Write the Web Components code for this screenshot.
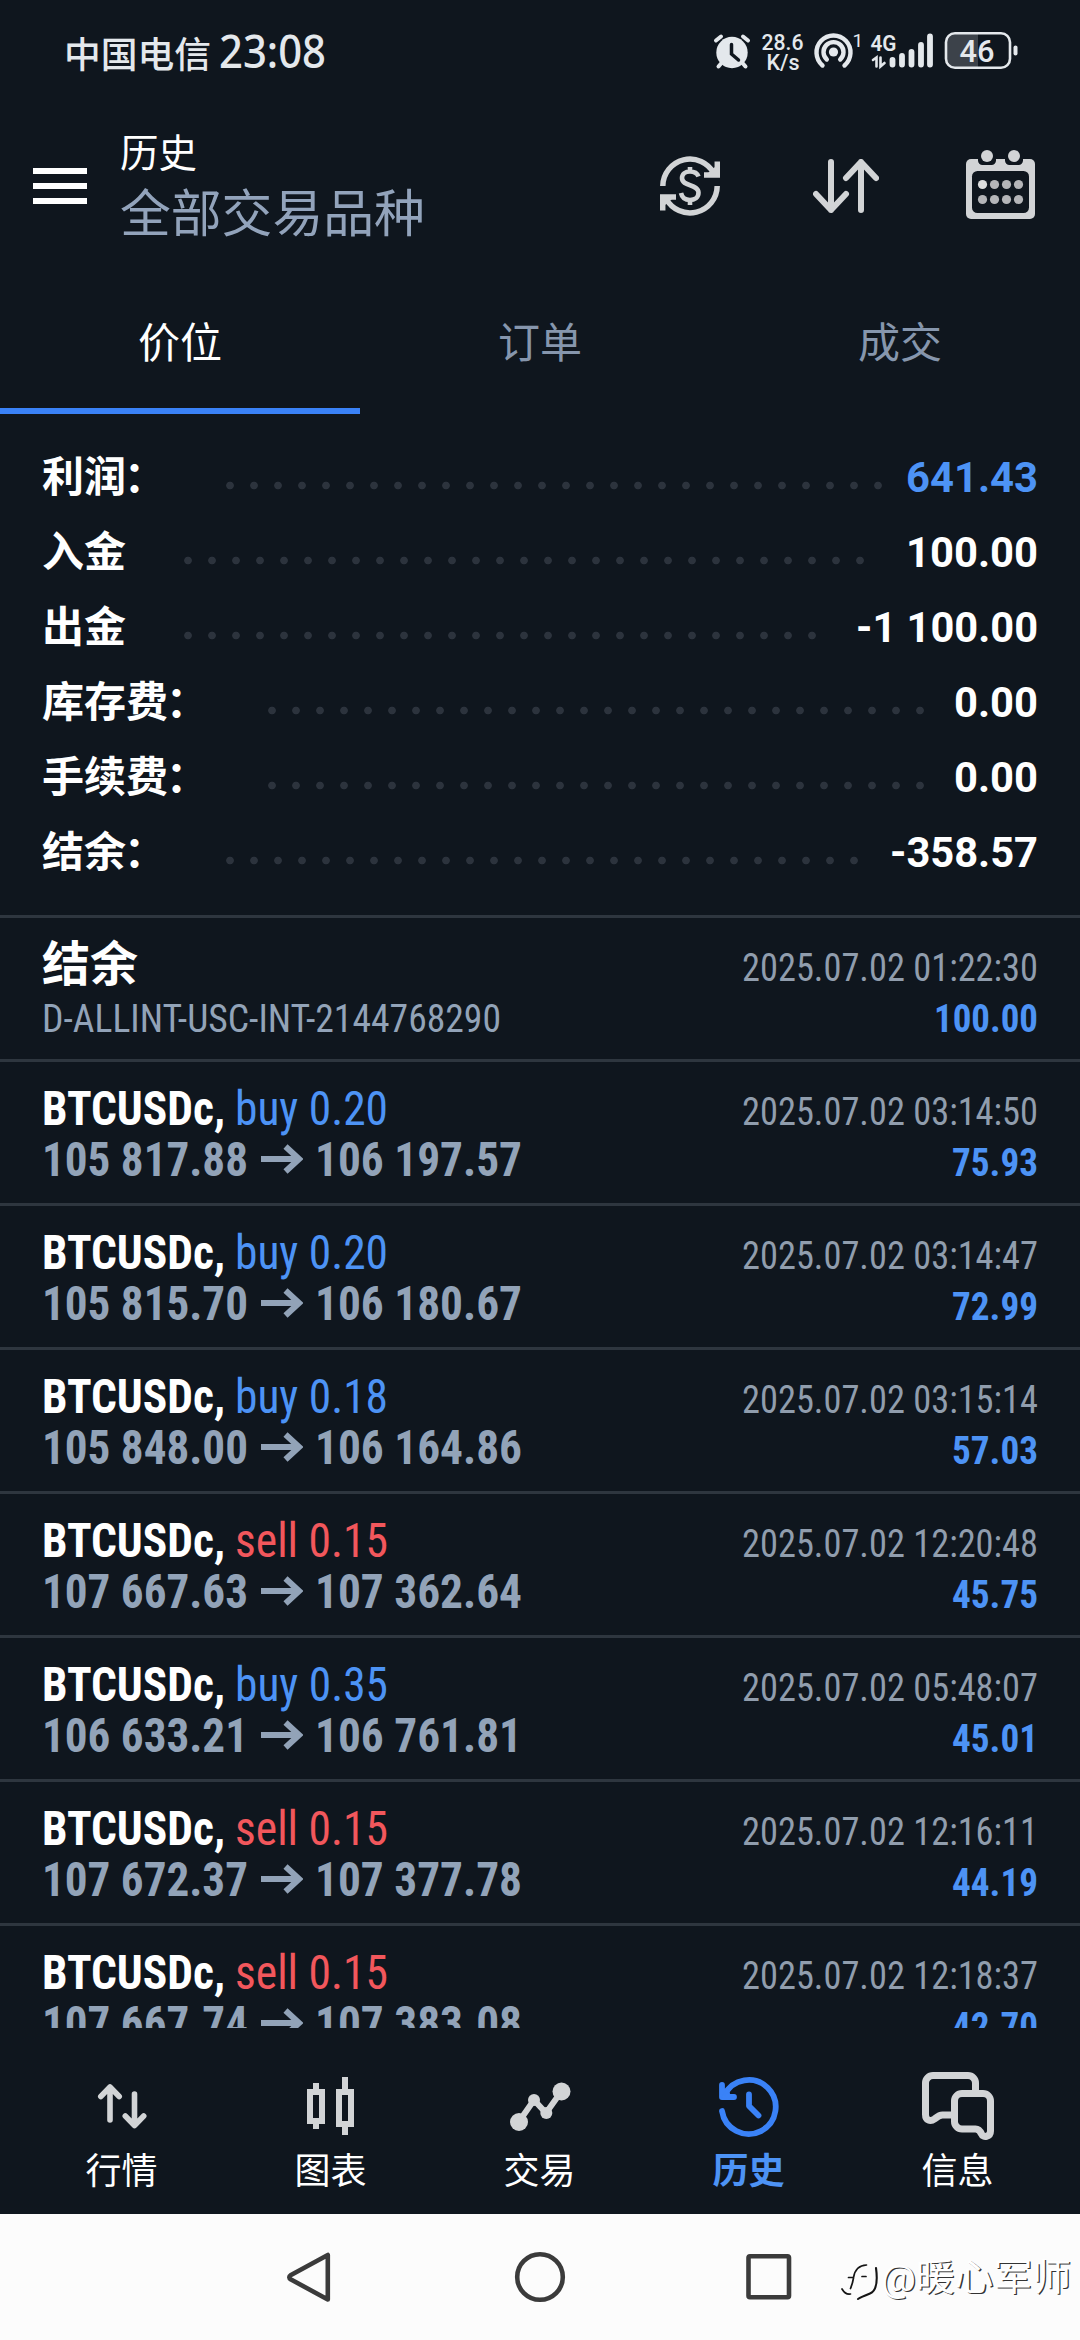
<!DOCTYPE html>
<html lang="zh-CN">
<head>
<meta charset="utf-8">
<title>历史</title>
<style>
html,body{margin:0;padding:0;background:#0f161e}
body{width:1080px;height:2340px;overflow:hidden;font-family:Roboto,"Noto Sans CJK SC",sans-serif;color:#fff}
</style>
</head>
<body>
<history-app></history-app>
<script>
const define = (name, html, init) => {
  const tpl = document.createElement('template');
  tpl.innerHTML = html;
  customElements.define(name, class extends HTMLElement {
    constructor() {
      super();
      this.attachShadow({ mode: 'open' }).appendChild(tpl.content.cloneNode(true));
    }
    connectedCallback() { if (init && !this.ready) { this.ready = true; init(this, this.shadowRoot); } }
  });
};

// Text squeezed or stretched horizontally to a given advance width.
define('fit-text', `<style>
:host{display:inline-block;white-space:nowrap;flex:none}
span{display:inline-block;transform-origin:0 50%}
</style><span><slot></slot></span>`, (el, root) => {
  const w = +el.getAttribute('w'), s = root.querySelector('span');
  el.style.width = w + 'px';
  const n = s.offsetWidth ? s.getBoundingClientRect().width : w;
  s.style.transform = 'scaleX(' + (w / n) + ')';
});

define('status-bar', `
<style>
:host{display:flex;height:104px;box-sizing:border-box;padding:0 49px 0 64px;align-items:flex-start;color:#e4e8ec}
.l{display:flex;align-items:baseline;padding-top:23px;line-height:56px;margin-right:auto;gap:8px}
.c{font-size:36.5px;font-weight:500}
.t{font-family:"Noto Sans",sans-serif;font-size:45px;font-weight:500}
svg{display:block;margin-top:26px}
text{font-family:Roboto,sans-serif;fill:#e4e8ec;font-weight:400;stroke:none}
</style>
<div class="l"><fit-text class="c" w="147">中国电信</fit-text><fit-text class="t" w="107">23:08</fit-text></div>
<svg width="319" height="50" viewBox="712 26 319 50" fill="none" stroke="#e4e8ec" stroke-linecap="round">
  <circle cx="732" cy="52.500" r="15.700" fill="#e4e8ec" stroke="none"/>
  <path d="M716 40.500l5-4M748 40.500l-5-4M721.500 63l-3 3.500M742.500 63l3 3.500" stroke-width="4"/>
  <path d="M731.500 44.500v9.500l7 6" stroke="#0f161e" stroke-width="3.500"/>
  <text x="761.500" y="50" font-size="22.500" textLength="42" lengthAdjust="spacingAndGlyphs" style="font-weight:500">28.6</text>
  <text x="766.500" y="69.500" font-size="22.500" textLength="33" lengthAdjust="spacingAndGlyphs" style="font-weight:500">K/s</text>
  <path d="M822.500 65.500A17 17 0 1 1 844.500 65.500M826.800 59.500A10 10 0 1 1 840.200 59.500" stroke-width="4.400"/>
  <circle cx="833.500" cy="52" r="4.600" fill="#e4e8ec" stroke="none"/>
  <text x="852.500" y="46.500" font-size="19">1</text>
  <text x="870.500" y="50.500" font-size="22.500" textLength="26" lengthAdjust="spacingAndGlyphs" style="font-weight:600">4G</text>
  <path d="M873 60l3.500-2.500v9M880.500 57.500v9l4-3.500" stroke-width="2.600"/>
  <path d="M892.500 60v4.500M902 56v8.500M911.500 52v12.500M921 45v19.500M930 36.500v28" stroke-width="5.800"/>
  <path d="M978 34H956a9 9 0 0 0-9 9v15a9 9 0 0 0 9 9h22z" fill="#3c424a" stroke="none"/>
  <rect x="946" y="33.200" width="64" height="34.500" rx="9" stroke-width="2.600"/>
  <path d="M1015.500 47.500v6" stroke-width="4"/>
  <text x="959.500" y="62" font-size="32" textLength="35" lengthAdjust="spacingAndGlyphs" style="font-weight:500">46</text>
</svg>`);

define('app-header', `
<style>
:host{display:flex;height:166px;box-sizing:border-box;padding-left:33px;padding-right:45px}
.m{display:flex;flex-direction:column;gap:9px;width:54px;padding-top:64px;margin-right:33px}
.m i{height:6px;background:#fff}
.t{padding-top:19px;margin-right:auto;line-height:61px}
.t div{height:61px}
.a{font-size:38.500px}.b{font-size:50.800px;color:#92a3bb}
.i{display:flex;align-items:flex-start}
svg{display:block}
.s1{margin:52px 93px 0 0}.s2{margin:55px 87px 0 0}.s3{margin-top:46px}
</style>
<div class="m"><i></i><i></i><i></i></div>
<div class="t"><div class="a">历史</div><div class="b">全部交易品种</div></div>
<div class="i">
<svg class="s1" width="60" height="60" fill="none" stroke="#d2d4d6" stroke-width="5.500">
  <path d="M2.800 30A27.200 27.200 0 0 1 54 17.500M57.200 30A27.200 27.200 0 0 1 6 42.500"/>
  <path d="M57.300 5.500V19H44M2.700 54.500V41H16"/>
  <path d="M48 17l7-6 2 7zM12 43l-7 6-2-7z" fill="#d2d4d6" stroke="none"/>
  <path d="M38.500 20.500C37 16.500 33.500 15.500 30 15.500c-4.500 0-8 2.500-8 6.600 0 9 16.500 5.300 16.500 14.700 0 4.700-4 7.200-8.500 7.200s-8-2.500-9-7M30 11v5M30 43v6" stroke-width="4.600"/>
</svg>
<svg class="s2" width="66" height="54" fill="none" stroke="#d2d4d6" stroke-width="6" stroke-linecap="round" stroke-linejoin="round">
  <path d="M18 3v48M3 35l15 16 15-16M48 51V3M33 19L48 3l15 16"/>
</svg>
<svg class="s3" width="69" height="69">
  <rect y="9" width="69" height="60" rx="5" fill="#d2d4d6"/>
  <path d="M12 8h18v2.500a4.500 4.500 0 0 1-4.500 4.500h-9A4.500 4.500 0 0 1 12 10.500zM39 8h18v2.500a4.500 4.500 0 0 1-4.500 4.500h-9a4.500 4.500 0 0 1-4.500-4.500z" fill="#0f161e"/>
  <rect x="6" y="21" width="57" height="42" rx="5.500" fill="#0f161e"/>
  <circle cx="21" cy="6" r="6" fill="#d2d4d6"/><circle cx="48" cy="6" r="6" fill="#d2d4d6"/>
  <g fill="#b4b5b8"><circle cx="16.500" cy="34.500" r="4.600" fill="#dcdddd"/><circle cx="28.500" cy="34.500" r="4.600"/><circle cx="40.500" cy="34.500" r="4.600"/><circle cx="52.500" cy="34.500" r="4.600"/><circle cx="16.500" cy="49.500" r="4.600"/><circle cx="28.500" cy="49.500" r="4.600"/><circle cx="40.500" cy="49.500" r="4.600"/><circle cx="52.500" cy="49.500" r="4.600"/></g>
</svg>
</div>`);

define('tab-item', `
<style>
:host{flex:1;box-sizing:border-box;height:144px;border-bottom:6px solid transparent;padding-top:9px;text-align:center;font-size:42px;line-height:129px;color:#8696ad}
:host([active]){color:#fff;border-color:#3a82f7}
</style><slot></slot>`);

define('summary-row', `
<style>
:host{display:flex;height:75px;padding:0 42px;line-height:75px;font-size:42px;font-weight:700}
.c{margin:0 2px 0 -2px}
.d{margin-left:50px;height:75px;margin-right:auto;background:radial-gradient(circle 4px at 12px 45.500px,#2c333d 3.400px,transparent 4.200px) 0 0/24px 75px repeat-x}
:host([blue]) .v{color:#4d93f5}
</style><span class="k"></span><span class="d"></span><span class="v"></span>`, (el, root) => {
  root.querySelector('.k').innerHTML = el.getAttribute('label').replace('：', '<span class="c">：</span>');
  root.querySelector('.d').style.width = el.getAttribute('dots') * 24 + 'px';
  root.querySelector('.v').innerHTML = '<fit-text w="' + el.getAttribute('w') + '">' + el.getAttribute('value') + '</fit-text>';
});

const dealStyle = `
<style>
:host{display:block;height:141px;border-top:3px solid #2e363f;padding:0 42px}
.r{display:flex;align-items:baseline;height:51px;line-height:51px;font-size:39px;font-stretch:condensed}
.r:first-of-type{padding-top:21px}
.r::before{content:"\\200b";font-size:48px;width:0}
.g{flex:1}
.n,.p{font-size:48px;font-weight:700}
.o{font-size:48px;font-weight:400;color:#4d93f5}
:host([side=sell]) .o{color:#f2575c}
.p,.x,.t{color:#92a3b8}.t{color:#909dad}
.v{font-weight:700;color:#4d93f5}
svg{flex:none;align-self:flex-start;margin:10px 12px 0 13px}
</style>`;
define('balance-item', dealStyle + `
<div class="r"><span class="n">结余</span><span class="g"></span><fit-text class="t" w="296">2025.07.02 01:22:30</fit-text></div>
<div class="r"><fit-text class="x" w="459">D-ALLINT-USC-INT-2144768290</fit-text><span class="g"></span><fit-text class="v" w="104">100.00</fit-text></div>`);

define('deal-item', dealStyle + `<div class="r a"></div><div class="r b"></div>`, (el, root) => {
  const a = n => el.getAttribute(n);
  root.querySelector('.a').innerHTML = `<fit-text class="n" w="183">BTCUSDc,</fit-text><fit-text class="o" w="153" style="margin-left:10px">${a('side')} ${a('lot')}</fit-text><span class="g"></span><fit-text class="t" w="296">2025.07.02 ${a('time')}</fit-text>`;
  root.querySelector('.b').innerHTML = `<fit-text class="p" w="206">${a('from')}</fit-text><svg width="42" height="30" fill="none" stroke="#92a3b8" stroke-width="6" stroke-linejoin="miter"><path d="M0 15h38M24.500 2.500L38 15 24.500 27.500"/></svg><fit-text class="p" w="207">${a('to')}</fit-text><span class="g"></span><fit-text class="v" w="86">${a('profit')}</fit-text>`;
});

define('nav-item', `
<style>
:host{width:209px;display:flex;flex-direction:column;align-items:center;font-size:36px;line-height:48px}
.i{height:78px;display:flex;align-items:center;margin-bottom:3px}
:host([active]) .l{color:#4d93f5;font-weight:700}
</style><div class="i"><slot name="icon"></slot></div><div class="l"><slot></slot></div>`);

define('bottom-nav', `
<style>
:host{display:flex;height:186px;box-sizing:border-box;padding:39px 18px 0 17px}
svg{display:block;overflow:visible}
</style>
<nav-item><svg slot="icon" width="48" height="44" fill="none" stroke="#d2d4d6" stroke-width="5.600" stroke-linecap="round" stroke-linejoin="round"><path d="M12 36V3M2.800 12.500L12 3l9.200 9.500M36.500 10v31M27.300 32l9.200 9.500 9.200-9.500"/></svg>行情</nav-item>
<nav-item><svg slot="icon" width="48" height="58" fill="none" stroke="#d2d4d6" stroke-width="6"><path d="M3 15h12v29H3zM9 6v9M9 44v8M32 15h12v32H32zM38 0v15M38 47v11"/></svg>图表</nav-item>
<nav-item><svg slot="icon" width="60" height="49" fill="#d2d4d6"><path d="M8.700 40L24 18l12 13L51 10" fill="none" stroke="#d2d4d6" stroke-width="6"/><circle cx="9" cy="40" r="9"/><circle cx="24" cy="18" r="6"/><circle cx="36.300" cy="31" r="6"/><circle cx="51.500" cy="9.500" r="9"/></svg>交易</nav-item>
<nav-item active><svg slot="icon" width="60" height="60" fill="none" stroke="#3a82f7" stroke-width="5.800" stroke-linecap="round" stroke-linejoin="round"><path d="M3 35A27 27 0 1 0 5.500 19M3 9v12h12"/><path d="M3.500 20.500l5-7 2.500 7z" fill="#3a82f7" stroke-width="2"/><path d="M30 18.500V30l9.500 9.500"/></svg>历史</nav-item>
<nav-item><svg slot="icon" width="72" height="68" fill="none" stroke="#d2d4d6" stroke-width="7" stroke-linejoin="round"><path d="M53.500 18V11a7.500 7.500 0 0 0-7.500-7.500H11A7.500 7.500 0 0 0 3.500 11v31.500c0 6 5 7.500 9 4.500 3-2.500 4.500-4 8-4H30"/><path d="M40 21.500h21a7.500 7.500 0 0 1 7.500 7.500v30c0 6-7.500 7-9 3-1.500-3.500-3-5-6-5H40a7.500 7.500 0 0 1-7.500-7.500V29a7.500 7.500 0 0 1 7.500-7.500z"/></svg>信息</nav-item>`);

define('system-nav', `
<style>
:host{display:flex;height:126px;background:#fcfcfc}
svg{display:block;margin:30px 0 0 280px;flex:none}
.w{display:flex;align-items:flex-start;height:66px;padding-top:35px;margin-left:39px;line-height:60px;font-size:37px;color:#fff;text-shadow:1.200px 1.200px .6px #333}
.w svg{margin:12px 2px 0 0}
</style>
<svg width="520" height="66" viewBox="280 2244 520 66" fill="none" stroke="#3b3b3b" stroke-width="4.600" stroke-linejoin="round">
<path d="M327.800 2255v44.500L291 2279.500q-3.500-2.300 0-4.600z"/><circle cx="540" cy="2277" r="22.800"/><rect x="748.500" y="2256.300" width="40.500" height="41" rx="1.500"/></svg>
<div class="w"><svg width="40" height="42" viewBox="838 2264 40 42" fill="none" stroke="#151515" stroke-width="1.700" stroke-linecap="round" stroke-linejoin="round"><path d="M847.500 2280.500h5q2-12 13-12.500M861 2279.500h4M852.500 2281q-1 6-3 10.500M849.500 2297q-5 1-8.500-5" /><path d="M875 2271q3 22-6 25.500T857 2302" stroke-width="2.100"/></svg><fit-text w="190">@暖心军师</fit-text></div>`);

define('history-app', `
<style>
:host{display:flex;flex-direction:column;width:1080px;height:2340px;overflow:hidden;background:#0f161e}
.tabs{display:flex}
.sum{height:501px;box-sizing:border-box;padding-top:26px}
.list{height:1113px;overflow:hidden}
</style>
<status-bar></status-bar>
<app-header></app-header>
<div class="tabs"><tab-item active>价位</tab-item><tab-item>订单</tab-item><tab-item>成交</tab-item></div>
<div class="sum">
<summary-row blue label="利润：" dots="28" value="641.43" w="132"></summary-row>
<summary-row label="入金" dots="29" value="100.00" w="132"></summary-row>
<summary-row label="出金" dots="27" value="-1 100.00" w="182"></summary-row>
<summary-row label="库存费：" dots="28" value="0.00" w="84"></summary-row>
<summary-row label="手续费：" dots="28" value="0.00" w="84"></summary-row>
<summary-row label="结余：" dots="27" value="-358.57" w="148"></summary-row>
</div>
<div class="list">
<balance-item></balance-item>
<deal-item side="buy" lot="0.20" time="03:14:50" from="105 817.88" to="106 197.57" profit="75.93"></deal-item>
<deal-item side="buy" lot="0.20" time="03:14:47" from="105 815.70" to="106 180.67" profit="72.99"></deal-item>
<deal-item side="buy" lot="0.18" time="03:15:14" from="105 848.00" to="106 164.86" profit="57.03"></deal-item>
<deal-item side="sell" lot="0.15" time="12:20:48" from="107 667.63" to="107 362.64" profit="45.75"></deal-item>
<deal-item side="buy" lot="0.35" time="05:48:07" from="106 633.21" to="106 761.81" profit="45.01"></deal-item>
<deal-item side="sell" lot="0.15" time="12:16:11" from="107 672.37" to="107 377.78" profit="44.19"></deal-item>
<deal-item side="sell" lot="0.15" time="12:18:37" from="107 667.74" to="107 383.08" profit="42.70"></deal-item>
</div>
<bottom-nav></bottom-nav>
<system-nav></system-nav>`);
</script>
</body>
</html>
